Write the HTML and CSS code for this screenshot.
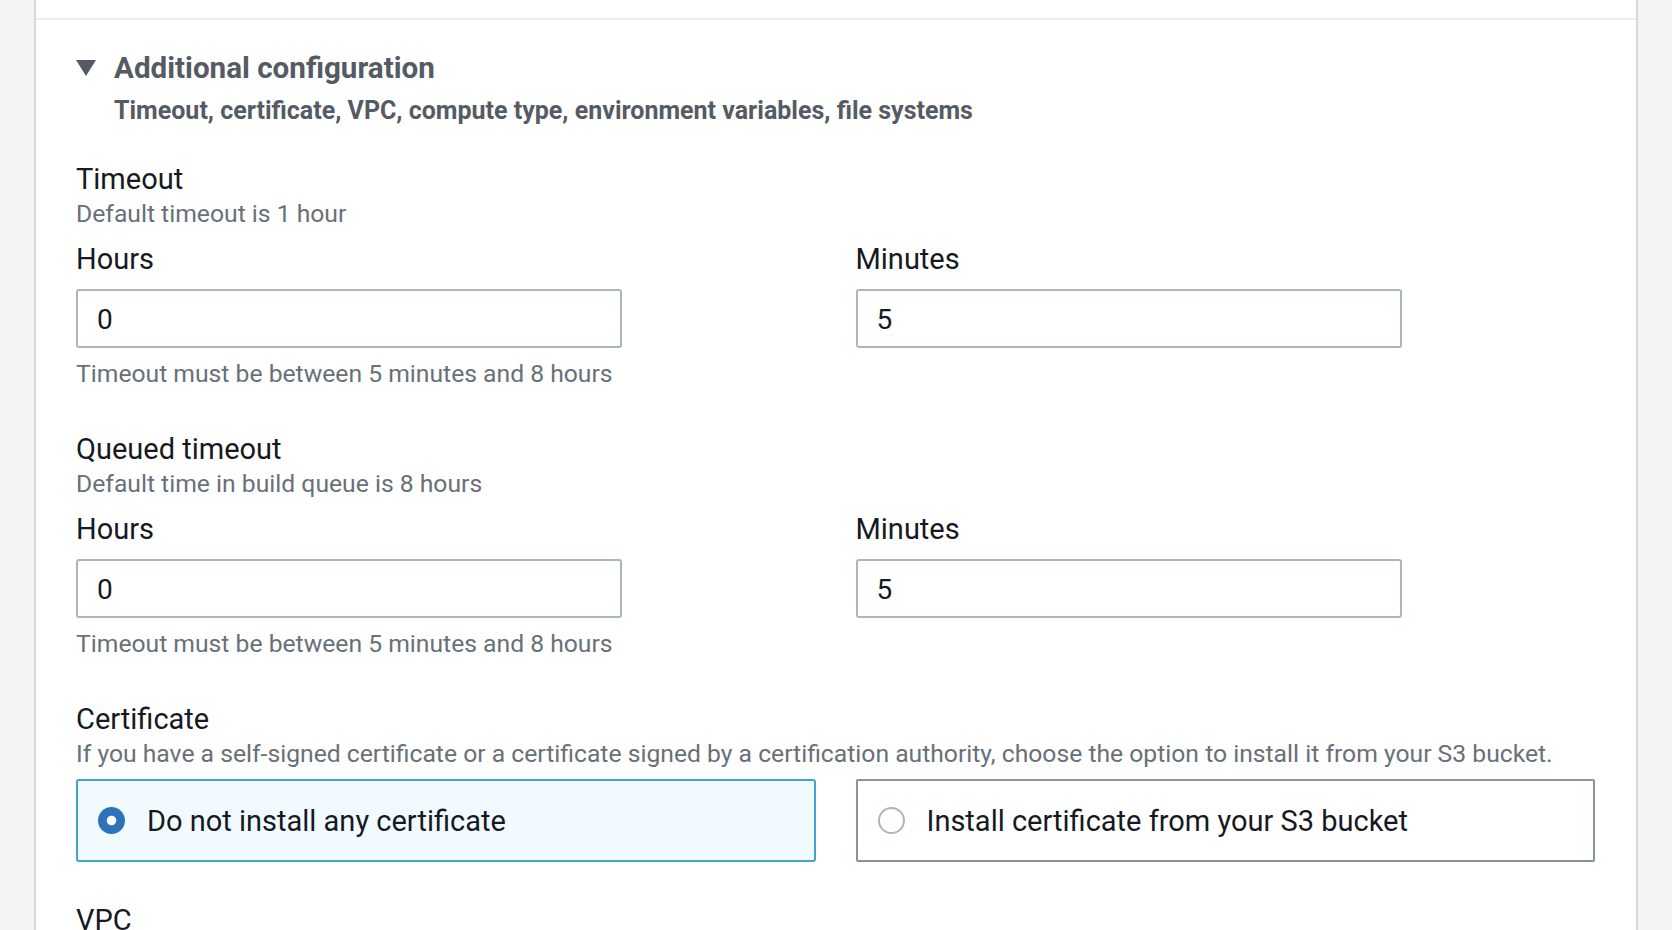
FILE: index.html
```html
<!DOCTYPE html>
<html lang="en">
<head>
<meta charset="utf-8">
<title>Additional configuration</title>
<link rel="stylesheet" href="styles.css">
</head>
<body>
<div class="page">
  <div class="card">
    <div class="card-top"></div>
    <section class="expander">
      <div class="exp-header">
        <svg class="caret" width="20" height="16" viewBox="0 0 20 16" aria-hidden="true"><polygon points="0,0 20,0 10,16" fill="#545b64"/></svg>
        <div class="exp-heading">
          <div class="exp-title">Additional configuration</div>
          <div class="exp-sub">Timeout, certificate, VPC, compute type, environment variables, file systems</div>
        </div>
      </div>

      <div class="fields">
        <div class="group">
          <div class="label">Timeout</div>
          <div class="desc">Default timeout is 1 hour</div>
          <div class="row">
            <div class="col">
              <div class="label">Hours</div>
              <div class="input">0</div>
            </div>
            <div class="col">
              <div class="label">Minutes</div>
              <div class="input">5</div>
            </div>
          </div>
          <div class="hint">Timeout must be between 5 minutes and 8 hours</div>
        </div>

        <div class="group">
          <div class="label">Queued timeout</div>
          <div class="desc">Default time in build queue is 8 hours</div>
          <div class="row">
            <div class="col">
              <div class="label">Hours</div>
              <div class="input">0</div>
            </div>
            <div class="col">
              <div class="label">Minutes</div>
              <div class="input">5</div>
            </div>
          </div>
          <div class="hint">Timeout must be between 5 minutes and 8 hours</div>
        </div>

        <div class="group">
          <div class="label">Certificate</div>
          <div class="desc">If you have a self-signed certificate or a certificate signed by a certification authority, choose the option to install it from your S3 bucket.</div>
          <div class="tiles">
            <div class="tile selected">
              <svg class="radio" width="27" height="27" viewBox="0 0 27 27" aria-hidden="true"><circle cx="13.5" cy="13.5" r="13.5" fill="#2c73bc"/><circle cx="13.5" cy="13.5" r="4.8" fill="#ffffff"/></svg>
              <span class="tile-text">Do not install any certificate</span>
            </div>
            <div class="tile">
              <svg class="radio" width="27" height="27" viewBox="0 0 27 27" aria-hidden="true"><circle cx="13.5" cy="13.5" r="12.5" fill="#ffffff" stroke="#aab7b8" stroke-width="2"/></svg>
              <span class="tile-text">Install certificate from your S3 bucket</span>
            </div>
          </div>
        </div>

        <div class="group">
          <div class="label">VPC</div>
        </div>
      </div>
    </section>
  </div>
</div>
</body>
</html>
```
FILE: styles.css
```css
html, body {
  margin: 0;
  padding: 0;
}

body {
  background: #f2f3f3;
  font-family: Roboto, "Liberation Sans", sans-serif;
  color: #16191f;
  height: 930px;
  overflow: hidden;
}

.page {
  padding: 0 34px;
}

.card {
  background: #ffffff;
  border-left: 2px solid #d3d8d8;
  border-right: 2px solid #d3d8d8;
  min-height: 1100px;
}

.card-top {
  height: 18px;
  border-bottom: 2px solid #eaeded;
}

.expander {
  padding: 32px 41px 0 40px;
}

.exp-header {
  display: flex;
  align-items: flex-start;
  gap: 18px;
}

.caret {
  margin-top: 8px;
  flex: none;
}

.exp-title {
  font-size: 29.6px;
  line-height: 32px;
  font-weight: 700;
  color: #545b64;
}

.exp-sub {
  margin-top: 15px;
  font-size: 25px;
  line-height: 24px;
  font-weight: 700;
  color: #545b64;
}

.fields {
  margin-top: 38px;
  display: flex;
  flex-direction: column;
  gap: 40px;
}

.label {
  font-size: 29px;
  line-height: 36px;
  color: #16191f;
}

.desc,
.hint {
  font-size: 24.7px;
  line-height: 34px;
  color: #687078;
}

.row {
  margin-top: 10px;
  display: grid;
  grid-template-columns: 1fr 1fr;
  column-gap: 40px;
}

.input {
  margin-top: 12px;
  box-sizing: border-box;
  width: 546px;
  height: 59px;
  border: 2px solid #aab7b8;
  border-radius: 3px;
  padding: 2px 19px 0;
  display: flex;
  align-items: center;
  font-size: 28px;
  color: #16191f;
}

.hint {
  margin-top: 9px;
}

.tiles {
  margin-top: 8px;
  display: grid;
  grid-template-columns: 1fr 1fr;
  column-gap: 40px;
}

.tile {
  box-sizing: border-box;
  height: 83px;
  border: 2px solid #879596;
  border-radius: 2px;
  padding-left: 20px;
  display: flex;
  align-items: center;
  gap: 22px;
  background: #ffffff;
}

.tile.selected {
  border-color: #44a3cb;
  background: #f1faff;
  border-radius: 3px;
}

.radio {
  flex: none;
}

.tile-text {
  font-size: 29px;
  color: #16191f;
}
```
